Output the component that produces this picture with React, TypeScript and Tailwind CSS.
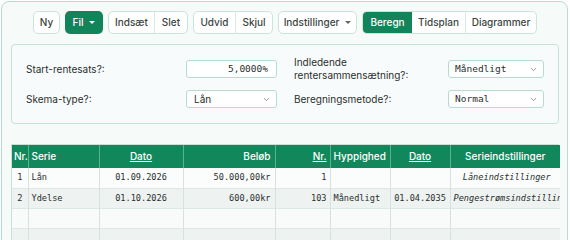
import React from 'react';
import { ChevronDown } from 'lucide-react';

const sans = { fontFamily: 'Inter, "Noto Sans", sans-serif' };
const mono = { fontFamily: '"DejaVu Sans Mono", "Liberation Mono", monospace' };

const Caret = ({ light }: { light?: boolean }) => (
  <span
    className={`ml-[6px] inline-block w-0 h-0 border-l-[3px] border-r-[3px] border-t-[3px] border-l-transparent border-r-transparent ${
      light ? 'border-t-white' : 'border-t-[#666]'
    }`}
  />
);

interface Row {
  nr: string;
  serie: string;
  dato: string;
  beloeb: string;
  antal: string;
  hyppighed: string;
  slut: string;
  settings: string;
}

const rows: Row[] = [
  { nr: '1', serie: 'Lån', dato: '01.09.2026', beloeb: '50.000,00kr', antal: '1', hyppighed: '', slut: '', settings: 'Låneindstillinger' },
  { nr: '2', serie: 'Ydelse', dato: '01.10.2026', beloeb: '600,00kr', antal: '103', hyppighed: 'Månedligt', slut: '01.04.2035', settings: 'Pengestrømsindstillinger' },
  { nr: '', serie: '', dato: '', beloeb: '', antal: '', hyppighed: '', slut: '', settings: '' },
  { nr: '', serie: '', dato: '', beloeb: '', antal: '', hyppighed: '', slut: '', settings: '' },
];

const rowBg = ['bg-[#fbfdfc]', 'bg-[#eef3f1]', 'bg-[#f8fbfa]', 'bg-[#eef3f1]'];

const App = () => {
  return (
    <div className="w-[570px] h-[240px] overflow-hidden bg-white pl-[1px] pt-[1px]" style={sans}>
      <div className="w-[567px] h-[260px] rounded-[8px] border border-[#b7ddd0] bg-[#f6faf9] pt-[9px] pl-[9px]">
        {/* toolbar */}
        <div className="flex items-center h-[23px] pl-[22px] gap-[5px] text-[10px] font-medium text-[#3a4642]">
          <button className="w-[27px] h-[23px] rounded-[5px] border border-[#c9e5da] bg-white">Ny</button>
          <button className="w-[38px] h-[23px] rounded-[5px] bg-[#11845a] text-white flex items-center justify-center">
            Fil
            <Caret light />
          </button>
          <div className="flex h-[23px] rounded-[5px] border border-[#c9e5da] bg-white overflow-hidden">
            <button className="w-[46px] border-r border-[#d9ebe3]">Indsæt</button>
            <button className="w-[32px]">Slet</button>
          </div>
          <div className="flex h-[23px] rounded-[5px] border border-[#c9e5da] bg-white overflow-hidden">
            <button className="w-[42px] border-r border-[#d9ebe3]">Udvid</button>
            <button className="w-[36px]">Skjul</button>
          </div>
          <button className="w-[79px] h-[23px] rounded-[5px] border border-[#c9e5da] bg-white flex items-center justify-center">
            Indstillinger
            <Caret />
          </button>
          <div className="flex h-[23px] rounded-[5px] border border-[#c9e5da] bg-white overflow-hidden">
            <button className="w-[49px] bg-[#11845a] text-white">Beregn</button>
            <button className="w-[54px] border-r border-[#d9ebe3]">Tidsplan</button>
            <button className="w-[70px]">Diagrammer</button>
          </div>
        </div>

        {/* settings panel */}
        <div className="mt-[10px] w-[548px] h-[80px] rounded-[4px] border border-[#c3e3d7] bg-[#f8fbfb] grid grid-cols-2 text-[10px] text-[#2a2f2d]">
          <div className="flex flex-col justify-center gap-[12px] pl-[14px] pr-[8px]">
            <div className="flex items-center justify-between h-[18px]">
              <span>Start-rentesats?:</span>
              <div className="w-[91px] h-[18px] rounded-[3px] border border-[#b7dccf] bg-white flex items-center justify-end pr-[8px] text-[9.5px]" style={mono}>
                5,0000%
              </div>
            </div>
            <div className="flex items-center justify-between h-[18px]">
              <span>Skema-type?:</span>
              <div className="w-[91px] h-[18px] rounded-[3px] border border-[#b7dccf] bg-white flex items-center justify-between pl-[7px] pr-[5px] text-[10px]">
                Lån
                <ChevronDown size={9} className="text-[#777]" />
              </div>
            </div>
          </div>
          <div className="flex flex-col justify-center gap-[12px] pl-[9px] pr-[14px]">
            <div className="flex items-center justify-between h-[18px]">
              <span className="leading-[13px]">
                Indledende
                <br />
                rentersammensætning?:
              </span>
              <div className="w-[96px] h-[18px] rounded-[3px] border border-[#b7dccf] bg-white flex items-center justify-between pl-[6px] pr-[5px] text-[9.5px]" style={mono}>
                Månedligt
                <ChevronDown size={9} className="text-[#777]" />
              </div>
            </div>
            <div className="flex items-center justify-between h-[18px]">
              <span>Beregningsmetode?:</span>
              <div className="w-[96px] h-[18px] rounded-[3px] border border-[#b7dccf] bg-white flex items-center justify-between pl-[6px] pr-[5px] text-[9.5px]" style={mono}>
                Normal
                <ChevronDown size={9} className="text-[#777]" />
              </div>
            </div>
          </div>
        </div>

        {/* table */}
        <div className="mt-[20px] w-[548px] border-l border-t border-[#c3e3d7]">
          <table className="table-fixed border-collapse w-[548px]">
            <colgroup>
              <col className="w-[16px]" />
              <col className="w-[71px]" />
              <col className="w-[84px]" />
              <col className="w-[92px]" />
              <col className="w-[55px]" />
              <col className="w-[60px]" />
              <col className="w-[60px]" />
              <col className="w-[110px]" />
            </colgroup>
            <thead>
              <tr className="h-[23px] bg-[#13875c] text-white text-[10px] font-medium">
                <th className="border-r border-[#5fb08f] px-[2px] text-left font-medium">Nr.</th>
                <th className="border-r border-[#5fb08f] px-[3px] text-left font-medium">Serie</th>
                <th className="border-r border-[#5fb08f] text-center font-medium underline">Dato</th>
                <th className="border-r border-[#5fb08f] px-[4px] text-right font-medium">Beløb</th>
                <th className="border-r border-[#5fb08f] px-[3px] text-right font-medium underline">Nr.</th>
                <th className="border-r border-[#5fb08f] px-[3px] text-left font-medium">Hyppighed</th>
                <th className="border-r border-[#5fb08f] text-center font-medium underline">Dato</th>
                <th className="text-center font-medium">Serieindstillinger</th>
              </tr>
            </thead>
            <tbody className="text-[8.6px] text-[#2a2f2d]" style={mono}>
              {rows.map((r, i) => (
                <tr key={i} className={`h-[20px] border-b border-[#dde7e3] ${rowBg[i]}`}>
                  <td className="border-r border-[#d6e2dd] text-center">{r.nr}</td>
                  <td className="border-r border-[#d6e2dd] px-[3px]">{r.serie}</td>
                  <td className="border-r border-[#d6e2dd] text-center">{r.dato}</td>
                  <td className="border-r border-[#d6e2dd] px-[4px] text-right">{r.beloeb}</td>
                  <td className="border-r border-[#d6e2dd] px-[3px] text-right">{r.antal}</td>
                  <td className="border-r border-[#d6e2dd] px-[3px]">{r.hyppighed}</td>
                  <td className="border-r border-[#d6e2dd] text-center">{r.slut}</td>
                  <td className="pl-[3px] italic whitespace-nowrap overflow-hidden text-center">
                    {r.settings}
                  </td>
                </tr>
              ))}
            </tbody>
          </table>
        </div>
      </div>
    </div>
  );
};

export default App;
